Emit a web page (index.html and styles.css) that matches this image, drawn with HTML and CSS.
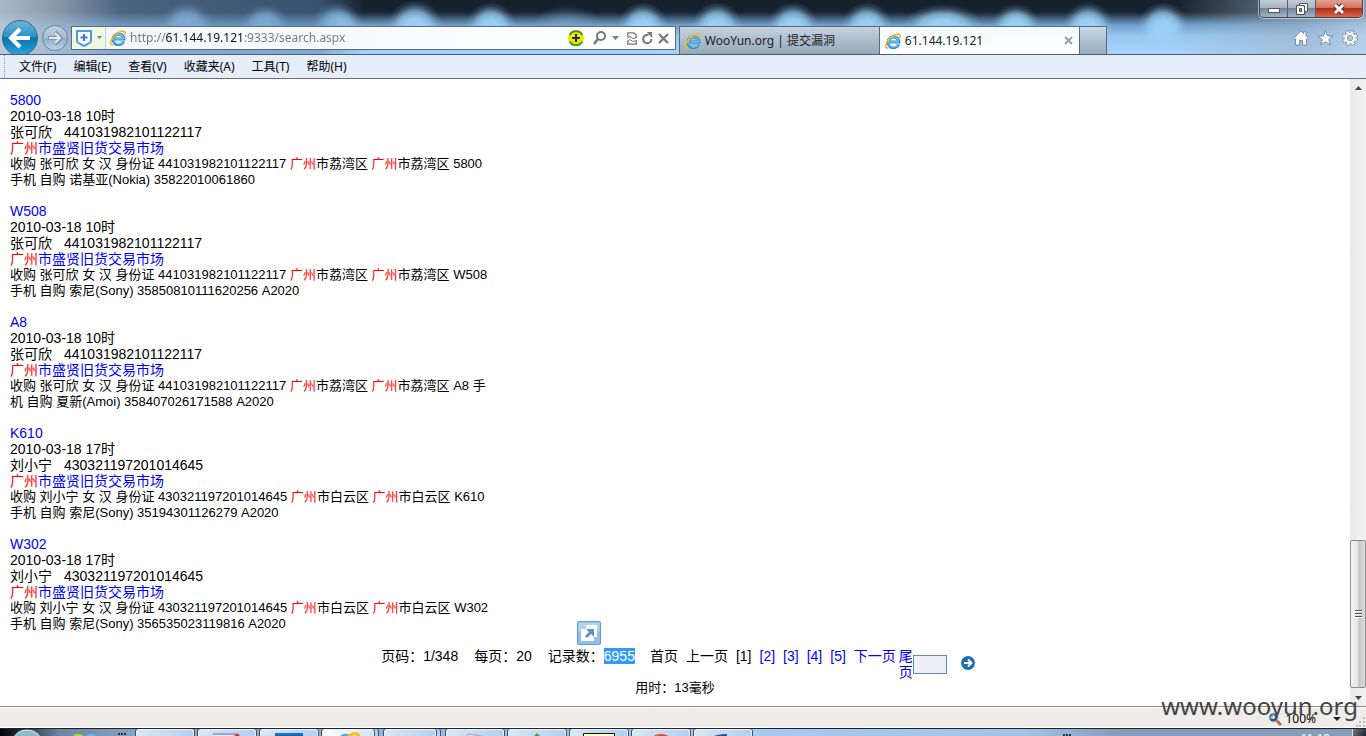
FILE: index.html
```
<!DOCTYPE html>
<html lang="zh-CN">

<head>
  <meta charset="UTF-8">
  <meta name="viewport" content="width=device-width, initial-scale=1.0">
  <title>61.144.19.121</title>
  <link rel="stylesheet" href="styles.css">
</head>

<body>
  <!-- Shared icon -->
  <svg class="defs" width="0" height="0" aria-hidden="true">
    <symbol id="ie" viewBox="0 0 16 16">
      <path d="M13.600 11.200A5.400 5.400 0 1 1 13.900 8.900H4.500" fill="none" stroke="#2f8fc8" stroke-width="3" />
      <path d="M13 11.200A5 5 0 1 1 13.500 8.900H5" fill="none" stroke="#7ccbf0" stroke-width="1.200" />
      <path d="M3.500 14.900C.2 15.700 0 12.500 2.200 8.800C4.800 4.400 9.500 .9 13 .9C15.300 .9 15.500 2.800 14.600 5" fill="none" stroke="#f3b71d" stroke-width="1.500" />
    </symbol>
  </svg>

  <header class="chrome">
    <div class="titlebar">
      <div class="window-buttons">
        <button class="win" aria-label="最小化"><svg width="14" height="14" viewBox="0 0 14 14"><rect x="1.500" y="6.500" width="11" height="4" fill="#fff" stroke="#4a5560" /></svg></button>
        <button class="win" aria-label="还原"><svg width="14" height="14" viewBox="0 0 14 14"><path d="M4.500 1.500h8v8h-8z" fill="#fff" stroke="#4a5560" /><path d="M1.500 3.500h8v9h-8z" fill="#fff" stroke="#4a5560" /><path d="M4.500 6.500h2v3h-2z" fill="#8799ac" stroke="#4a5560" /></svg></button>
        <button class="win win-close" aria-label="关闭"><svg width="14" height="14" viewBox="0 0 14 14"><path d="M3 3l8 8M11 3l-8 8" stroke="#5b3030" stroke-width="5" /><path d="M3 3l8 8M11 3l-8 8" stroke="#fff" stroke-width="3" /></svg></button>
      </div>
    </div>

    <div class="navbar">
      <button class="back" aria-label="后退"><svg width="24" height="24" viewBox="0 0 24 24"><path d="M22 12H4M12 3L3 12l9 9" fill="none" stroke="#fff" stroke-width="4" /></svg></button>
      <button class="forward" aria-label="前进"><svg width="16" height="16" viewBox="0 0 16 16"><path d="M1 8h11M8 2l6 6-6 6" fill="none" stroke="#7f98ad" stroke-width="4" /><path d="M2 8h10M8 3l5 5-5 5" fill="none" stroke="#dfeaf3" stroke-width="2" /></svg></button>

      <div class="address">
        <button class="shield" aria-label="安全">
          <svg width="18" height="18" viewBox="0 0 18 18"><path d="M2 2h14v10c0 2-4 3-7 5c-3-2-7-3-7-5z" fill="#fff" stroke="#5598ea" stroke-width="2" stroke-linejoin="round" /><path d="M9 5v7M5.500 8.500h7" stroke="#2f7be0" stroke-width="2" /></svg>
          <svg width="5" height="4" viewBox="0 0 5 4"><path d="M0 0h5L2.500 3z" fill="#777" /></svg>
        </button>
        <svg class="site-icon" width="16" height="16"><use href="#ie" /></svg>
        <input class="url" type="text" aria-label="地址" value="http://61.144.19.121:9333/search.aspx">
        <div class="address-tools">
          <button aria-label="加速"><svg width="16" height="16" viewBox="0 0 16 16"><circle cx="8" cy="8" r="8" fill="#f4df10" /><path d="M1.800 5A7 7 0 0 1 14.200 5M1.800 11.500A7 7 0 0 0 14.200 11.500" fill="none" stroke="#399b20" stroke-width="2" /><path d="M8 4v8M4 8h8" stroke="#123b08" stroke-width="2" /></svg></button>
          <button class="search" aria-label="搜索"><svg width="26" height="14" viewBox="0 0 26 14"><circle cx="8" cy="5" r="4" fill="none" stroke="#777" stroke-width="2" /><path d="M5 8l-4 5" stroke="#777" stroke-width="2.500" /><path d="M19 5h7l-3.500 4z" fill="#777" /></svg></button>
          <button aria-label="兼容性视图"><svg width="10" height="13" viewBox="0 0 10 13"><path d="M.8 5V.8h6L9.200 3v3M.8 9v3.200h8.400V9" fill="none" stroke="#777" stroke-width="1.300" /><path d="M0 6.500l3-2 3 2 4-1M0 9.500l3-2 3 2 4-1" fill="none" stroke="#777" /></svg></button>
          <button aria-label="刷新"><svg width="11" height="13" viewBox="0 0 11 13"><path d="M9.500 7A4.200 4.200 0 1 1 6.500 3" fill="none" stroke="#777" stroke-width="2" /><path d="M5 0h5v6z" fill="#777" /></svg></button>
          <button aria-label="停止"><svg width="11" height="11" viewBox="0 0 11 11"><path d="M1 1l9 9M10 1l-9 9" stroke="#777" stroke-width="2.200" /></svg></button>
        </div>
      </div>

      <nav class="tabs">
        <a class="tab" href="#wooyun"><svg width="16" height="16"><use href="#ie" /></svg><span>WooYun.org | 提交漏洞</span></a>
        <a class="tab tab-active" href="#search"><svg width="16" height="16"><use href="#ie" /></svg><span>61.144.19.121</span><svg class="tab-close" width="9" height="9" viewBox="0 0 9 9"><path d="M1 1l7 7M8 1l-7 7" stroke="#9a9fa3" stroke-width="2" /></svg></a>
        <button class="tab-new" aria-label="新建选项卡"></button>
      </nav>

      <div class="tools">
        <button aria-label="主页"><svg width="16" height="16" viewBox="0 0 16 16"><path d="M8 1l2.500 2.400V1.800h2.500v4L15.500 8.500l-1 1-1-.8V15h-4v-4.500h-3V15h-4V8.700l-1 .8-1-1z" fill="#fff" stroke="#7590ab" /></svg></button>
        <button aria-label="收藏夹"><svg width="17" height="16" viewBox="0 0 17 16"><path d="M8.500.8l2 5.200h5.700l-4.500 3.500 1.700 5.500-4.900-3.300L3.600 15l1.700-5.500L.8 6h5.700z" fill="#fff" stroke="#7590ab" /></svg></button>
        <button aria-label="工具"><svg width="16" height="16" viewBox="0 0 16 16"><circle cx="8" cy="8" r="6.300" fill="none" stroke="#7590ab" stroke-width="3.400" stroke-dasharray="3.300 1.650" /><circle cx="8" cy="8" r="4.200" fill="none" stroke="#7590ab" stroke-width="4" /><circle cx="8" cy="8" r="6.200" fill="none" stroke="#fff" stroke-width="2" stroke-dasharray="2.400 2.470" stroke-dashoffset="-.4" /><circle cx="8" cy="8" r="4.200" fill="none" stroke="#fff" stroke-width="2.500" /></svg></button>
      </div>
    </div>
  </header>

  <nav class="menubar">
    <a href="#file">文件(F)</a>
    <a href="#edit">编辑(E)</a>
    <a href="#view">查看(V)</a>
    <a href="#favorites">收藏夹(A)</a>
    <a href="#tools">工具(T)</a>
    <a href="#help">帮助(H)</a>
  </nav>

  <div class="viewport">
    <main class="page">
      <section class="results">
        <article class="result">
          <a class="title" href="#r1">5800</a>
          <p>2010-03-18 10时</p>
          <p><span class="name">张可欣</span>441031982101122117</p>
          <a class="market" href="#m1"><em>广州</em>市盛贤旧货交易市场</a>
          <p class="detail">收购 张可欣 女 汉 身份证 441031982101122117 <em>广州</em>市荔湾区 <em>广州</em>市荔湾区 5800<br>手机 自购 诺基亚(Nokia) 35822010061860</p>
        </article>
        <article class="result">
          <a class="title" href="#r2">W508</a>
          <p>2010-03-18 10时</p>
          <p><span class="name">张可欣</span>441031982101122117</p>
          <a class="market" href="#m2"><em>广州</em>市盛贤旧货交易市场</a>
          <p class="detail">收购 张可欣 女 汉 身份证 441031982101122117 <em>广州</em>市荔湾区 <em>广州</em>市荔湾区 W508<br>手机 自购 索尼(Sony) 35850810111620256 A2020</p>
        </article>
        <article class="result">
          <a class="title" href="#r3">A8</a>
          <p>2010-03-18 10时</p>
          <p><span class="name">张可欣</span>441031982101122117</p>
          <a class="market" href="#m3"><em>广州</em>市盛贤旧货交易市场</a>
          <p class="detail">收购 张可欣 女 汉 身份证 441031982101122117 <em>广州</em>市荔湾区 <em>广州</em>市荔湾区 A8 手<br>机 自购 夏新(Amoi) 358407026171588 A2020</p>
        </article>
        <article class="result">
          <a class="title" href="#r4">K610</a>
          <p>2010-03-18 17时</p>
          <p><span class="name">刘小宁</span>430321197201014645</p>
          <a class="market" href="#m4"><em>广州</em>市盛贤旧货交易市场</a>
          <p class="detail">收购 刘小宁 女 汉 身份证 430321197201014645 <em>广州</em>市白云区 <em>广州</em>市白云区 K610<br>手机 自购 索尼(Sony) 35194301126279 A2020</p>
        </article>
        <article class="result">
          <a class="title" href="#r5">W302</a>
          <p>2010-03-18 17时</p>
          <p><span class="name">刘小宁</span>430321197201014645</p>
          <a class="market" href="#m5"><em>广州</em>市盛贤旧货交易市场</a>
          <p class="detail">收购 刘小宁 女 汉 身份证 430321197201014645 <em>广州</em>市白云区 <em>广州</em>市白云区 W302<br>手机 自购 索尼(Sony) 356535023119816 A2020</p>
        </article>
      </section>

      <form class="pager">
        <div class="counts">
          <span>页码：1/348</span>
          <span>每页：20</span>
          <span class="total">记录数：<mark>6955</mark>
            <button class="accelerator" type="button" aria-label="加速器"><svg width="24" height="24" viewBox="0 0 24 24"><rect x=".5" y=".5" width="23" height="23" rx="1" fill="#92bfe3" stroke="#639dcc" /><path d="M1.500 1.500h21v9h-21z" fill="#b1d3ed" /><path d="M9 4h11v12h-3v4H4V8h5z" fill="#fff" /><path d="M9 8h8v8l-3-3-4 4-2-2 4-4z" fill="#5b91bd" /></svg></button>
          </span>
        </div>
        <div class="links">
          <span>首页</span>
          <span>上一页</span>
          <span>[1]</span>
          <a href="#p2">[2]</a>
          <a href="#p3">[3]</a>
          <a href="#p4">[4]</a>
          <a href="#p5">[5]</a>
          <a href="#next">下一页</a>
        </div>
        <a class="last" href="#last">尾页</a>
        <input class="goto" type="text" aria-label="跳转页码">
        <button class="go" type="button" aria-label="跳转"><svg width="14" height="14" viewBox="0 0 14 14"><circle cx="7" cy="7" r="7" fill="#1a6fb5" /><path d="M3 7h7M7 3.500L10.500 7 7 10.500" fill="none" stroke="#fff" stroke-width="2" /></svg></button>
      </form>
      <p class="elapsed">用时：13毫秒</p>
    </main>

    <div class="scrollbar">
      <button aria-label="向上滚动"><svg width="7" height="4" viewBox="0 0 7 4"><path d="M0 4h7L3.500 0z" fill="#444" /></svg></button>
      <div class="track">
        <div class="thumb"><i></i><i></i><i></i></div>
      </div>
      <button aria-label="向下滚动"><svg width="7" height="4" viewBox="0 0 7 4"><path d="M0 0h7L3.500 4z" fill="#444" /></svg></button>
    </div>
  </div>

  <footer class="statusbar">
    <button class="zoom">
      <svg width="14" height="14" viewBox="0 0 14 14"><path d="M8 8l5 5" stroke="#a87545" stroke-width="3" /><circle cx="5.500" cy="5.500" r="4.500" fill="#2774c4" stroke="#b8c8d8" /><path d="M5.500 3v5M3 5.500h5" stroke="#fff" stroke-width="1.500" /></svg>
      <span>100%</span>
      <svg class="caret" width="8" height="4" viewBox="0 0 8 4"><path d="M0 0h8L4 4z" fill="#222" /></svg>
    </button>
    <svg class="grip" width="10" height="10" viewBox="0 0 10 10"><path d="M7 0h2v2h-2zM3 4h2v2h-2zM7 4h2v2h-2zM0 8h2v2h-2zM3 8h2v2h-2zM7 8h2v2h-2z" fill="#bbb" /></svg>
    <span class="watermark">www.wooyun.org</span>
  </footer>

  <div class="taskbar">
    <div class="start">
      <svg width="28" height="8" viewBox="0 0 28 8"><ellipse cx="14" cy="10" rx="13" ry="9" fill="#93b7cb" stroke="#d5f2fa" /></svg>
      <svg class="quick" width="26" height="8" viewBox="0 0 26 8"><ellipse cx="6" cy="9" rx="6" ry="4" fill="#b6df18" /><ellipse cx="19" cy="9" rx="6" ry="4" fill="#5cbdf0" /></svg>
      <svg width="8" height="8" viewBox="0 0 8 8"><path d="M0 5h2M3 5h2M6 5h2" stroke="#333" stroke-width="2" /></svg>
    </div>
    <button class="task" aria-label="文件夹"><svg width="32" height="8" viewBox="0 0 32 8"><path d="M7 6h14v2h-14z" fill="#c5b98b" /></svg></button>
    <button class="task" aria-label="画图"><svg width="32" height="8" viewBox="0 0 32 8"><path d="M2 3h26v5h-26z" fill="#e8e5fa" /><path d="M2 3h26v2h-26z" fill="#a69fd0" /><circle cx="26" cy="7" r="3" fill="#d33b2a" /></svg></button>
    <button class="task" aria-label="窗口"><svg width="32" height="8" viewBox="0 0 32 8"><path d="M2 3h28v5h-28z" fill="#1874ce" /><path d="M2 6h28" stroke="#0a4d9c" /></svg></button>
    <button class="task stacked task-current" aria-label="Internet Explorer"><svg width="32" height="8" viewBox="0 0 32 8"><path d="M8 8c4-4 8-3 11-1" fill="none" stroke="#4ba7d5" stroke-width="3" /><path d="M16 7c5-5 12-4 11 1" fill="none" stroke="#f2bd22" stroke-width="3" /></svg></button>
    <button class="task stacked" aria-label="命令行"><svg width="32" height="8" viewBox="0 0 32 8"><path d="M2 6h28v2h-28z" fill="#858a90" /></svg></button>
    <button class="task" aria-label="文档"><svg width="32" height="8" viewBox="0 0 32 8"><path d="M7 8l2-4 20 3v1z" fill="#e6e2f2" stroke="#a69dc4" /></svg></button>
    <button class="task" aria-label="下载"><svg width="32" height="8" viewBox="0 0 32 8"><path d="M16 3l5 5h-10z" fill="#2fae3e" /></svg></button>
    <button class="task" aria-label="便签"><svg width="32" height="8" viewBox="0 0 32 8"><path d="M.5 3.500h31v6h-31z" fill="#ffffc8" stroke="#111" /></svg></button>
    <button class="task" aria-label="浏览器"><svg width="32" height="8" viewBox="0 0 32 8"><ellipse cx="16" cy="9" rx="9" ry="5" fill="#df4b3b" /></svg></button>
    <button class="task" aria-label="编辑器"><svg width="32" height="8" viewBox="0 0 32 8"><path d="M2 8c6-3 12-4 18-4v4z" fill="#2856a5" /></svg></button>
    <div class="tray">
      <svg width="8" height="8" viewBox="0 0 8 8"><path d="M0 6h2M3 6h2M6 6h2" stroke="#333" stroke-width="2" /></svg>
      <time>11:19</time>
      <button class="desktop" aria-label="显示桌面"></button>
    </div>
  </div>
</body>

</html>
```
FILE: styles.css
```
/* Global Styles */
* {
  box-sizing: border-box;
}

body {
  margin: 0;
  height: 100vh;
  display: flex;
  flex-direction: column;
  overflow: hidden;
  background: #fff;
  color: #000;
  font-family: "Liberation Sans", "Noto Sans CJK SC", sans-serif;
  font-size: 14px;
  line-height: 16px;
}

button {
  display: flex;
  align-items: center;
  justify-content: center;
  padding: 0;
  border: 0;
  background: none;
  color: inherit;
  font: inherit;
}

svg {
  flex: none;
}

a {
  color: #0000ff;
  text-decoration: none;
}

p {
  margin: 0;
}

em {
  color: #ff0000;
  font-style: normal;
}

.defs {
  position: absolute;
}

/* Window frame */
.chrome {
  --glow: rgba(156, 210, 250, 0.95) 25%, rgba(156, 210, 250, 0.7) 55%, rgba(156, 210, 250, 0.2) 80%, rgba(156, 210, 250, 0);
  border-bottom: 1px solid #4d5c70;
  background:
    linear-gradient(90deg, rgba(186, 201, 216, 0.9) 0, rgba(160, 180, 202, 0.8) 60px, rgba(110, 145, 182, 0.6) 120px, rgba(90, 130, 175, 0.5) 320px, rgba(90, 130, 175, 0) 365px),
    linear-gradient(90deg, rgba(170, 190, 210, 0) 86%, rgba(160, 180, 200, 0.6) 95%, rgba(190, 210, 230, 0.7)),
    radial-gradient(ellipse 26px 24px at 187px 26px, var(--glow)),
    radial-gradient(ellipse 24px 22px at 265px 26px, var(--glow)),
    radial-gradient(ellipse 26px 24px at 337px 26px, var(--glow)),
    radial-gradient(ellipse 28px 26px at 415px 26px, var(--glow)),
    radial-gradient(ellipse 25px 24px at 491px 26px, var(--glow)),
    radial-gradient(ellipse 36px 20px at 567px 26px, rgba(122, 162, 204, 0.8), rgba(122, 162, 204, 0)),
    radial-gradient(ellipse 25px 24px at 643px 26px, var(--glow)),
    radial-gradient(ellipse 25px 24px at 717px 26px, var(--glow)),
    radial-gradient(ellipse 25px 24px at 793px 26px, var(--glow)),
    radial-gradient(ellipse 25px 24px at 867px 26px, var(--glow)),
    radial-gradient(ellipse 40px 22px at 943px 26px, var(--glow)),
    radial-gradient(ellipse 24px 22px at 1016px 26px, var(--glow)),
    radial-gradient(ellipse 25px 24px at 1088px 26px, var(--glow)),
    radial-gradient(ellipse 25px 24px at 1163px 26px, var(--glow)),
    linear-gradient(#14202c 0, #17232f 12px, #6f9fca 25px, #97c7f0 36px, #a8d4fb 54px);
}

.titlebar {
  display: flex;
  justify-content: flex-end;
  height: 18px;
  padding-right: 3px;
}

.window-buttons {
  display: flex;
  border: 1px solid #3c4753;
  border-top: 0;
  border-radius: 0 0 5px 5px;
  box-shadow: 0 0 0 1px rgba(255, 255, 255, 0.5);
  overflow: hidden;
}

.win {
  width: 28px;
  height: 17px;
  border-right: 1px solid #55616e;
  background: linear-gradient(#c5ced8, #a5b1bf 50%, #75869a 50%, #a3b4c6);
}

.win-close {
  width: 46px;
  border-right: 0;
  background: linear-gradient(#e0a294, #cf6c5a 50%, #b02d17 50%, #d9674a);
}

.navbar {
  display: flex;
  height: 36px;
  padding-left: 2px;
  font-family: "Noto Sans", "Noto Sans CJK SC", sans-serif;
  font-size: 12px;
  overflow: hidden;
}

.back {
  flex: none;
  width: 36px;
  height: 36px;
  margin-top: 2px;
  border: 1px solid #3d6482;
  border-radius: 50%;
  background: linear-gradient(#6db5d9, #2a93c8 45%, #0873b0 50%, #2ba4da);
}

.forward {
  flex: none;
  width: 26px;
  height: 26px;
  margin: 7px 3px 0 4px;
  border: 1px solid #6e8597;
  border-radius: 50%;
  background: linear-gradient(#c0d2e1, #a4bccf 50%, #8fafc8 50%, #b8d4ea);
}

.address {
  flex: 12 1 0;
  display: flex;
  align-items: center;
  height: 24px;
  margin-top: 8px;
  border: 1px solid #5d6b78;
  background: linear-gradient(90deg, #f2f7fb, #fff);
}

.shield {
  gap: 4px;
  width: 34px;
  height: 22px;
  border-right: 1px solid #ccd3c8;
  background: #eff8e0;
}

.site-icon {
  margin: 0 4px;
}

.url {
  flex: 1;
  min-width: 0;
  padding: 0;
  border: 0;
  outline: 0;
  /* the domain is darker than the rest of the address */
  background: linear-gradient(90deg, #777 36px, #111 36px, #111 114px, #777 114px);
  -webkit-background-clip: text;
  background-clip: text;
  color: transparent;
  font: inherit;
}

.address-tools {
  display: flex;
  align-items: center;
  gap: 5px;
  padding-right: 6px;
}

.address-tools .search {
  margin: 0 3px 0 4px;
}

.tabs {
  display: flex;
  height: 28px;
  margin: 8px 0 0 3px;
  border: 1px solid #5d6b78;
  border-bottom: 0;
}

.tab {
  display: flex;
  align-items: center;
  gap: 4px;
  width: 200px;
  padding: 0 6px 0 5px;
  border-right: 1px solid #5d6b78;
  background: linear-gradient(#c6d3df, #aebdcc 50%, #95a8ba);
  color: #222;
}

.tab-active {
  background: linear-gradient(#f2fbff, #fff);
}

.tab-close {
  margin-left: auto;
}

.tab-new {
  width: 26px;
  background: linear-gradient(#c8d8e6, #95abc0);
}

.tools {
  flex: 5 1 0;
  display: flex;
  align-items: center;
  justify-content: flex-end;
  gap: 8px;
  padding: 4px 8px 0 0;
}

/* Menu */
.menubar {
  display: flex;
  align-items: center;
  gap: 17px;
  height: 23px;
  padding-left: 14px;
  margin-left: 4px;
  border-left: 1px dotted #999;
  box-shadow: -4px 0 0 #e6eefa;
  background: #e6eefa;
  font-family: "Noto Sans", "Noto Sans CJK SC", sans-serif;
  font-size: 12px;
}

.menubar a {
  color: #000;
}

/* Page */
.viewport {
  flex: 1;
  display: flex;
  min-height: 0;
  border-top: 1px solid #6c6f74;
}

.page {
  flex: 1;
  padding: 13px 0 0 10px;
  overflow: hidden;
}

.results {
  display: grid;
  gap: 15px;
}

.result {
  display: flex;
  flex-direction: column;
  align-items: flex-start;
}

.result .name {
  margin-right: 12px;
}

.detail {
  font-size: 13px;
}

.pager {
  display: flex;
  align-items: flex-start;
  justify-content: center;
  margin: 16px 0 0;
  padding-right: 4px;
}

.counts {
  display: flex;
  gap: 16px;
}

.total {
  position: relative;
}

mark {
  background: #3399ff;
  color: #fff;
}

.accelerator {
  position: absolute;
  right: 34px;
  bottom: 19px;
}

.links {
  display: flex;
  gap: 8px;
  margin-left: 15px;
}

.last {
  width: 14px;
  margin-left: 3px;
}

.goto {
  width: 34px;
  height: 19px;
  margin: 7px 14px 0 0;
  border: 1px solid #648bae;
  background: #ecf0f4;
}

.go {
  margin-top: 8px;
}

.elapsed {
  padding: 0 10px 0 0;
  font-size: 13px;
  text-align: center;
}

/* Scrollbar */
.scrollbar {
  display: flex;
  flex-direction: column;
  width: 16px;
  background: linear-gradient(90deg, #e8e8e8, #f3f3f3);
}

.scrollbar button {
  height: 17px;
}

.track {
  flex: 1;
  display: flex;
  flex-direction: column;
  justify-content: flex-end;
  padding-bottom: 1px;
}

.thumb {
  display: flex;
  flex-direction: column;
  align-items: center;
  justify-content: center;
  gap: 1px;
  height: 25%;
  border: 1px solid #8c8c8c;
  border-radius: 2px;
  background: linear-gradient(90deg, #f6f6f6, #e4e4e4 50%, #c6c6c6 55%, #dcdcdc);
}

.thumb i {
  width: 7px;
  height: 2px;
  border-bottom: 1px solid #fff;
  background: #555;
}

/* Status bar */
.statusbar {
  position: relative;
  display: flex;
  align-items: center;
  justify-content: flex-end;
  gap: 15px;
  height: 22px;
  border-top: 1px solid #8a8a8a;
  border-bottom: 1px solid #fff;
  box-shadow: inset 0 1px 0 #fff;
  background: #f0ecea;
  font-family: "Noto Sans", sans-serif;
  font-size: 12px;
}

.zoom {
  gap: 3px;
  padding-top: 3px;
}

.zoom .caret {
  margin-left: 14px;
}

.grip {
  align-self: flex-end;
}

.watermark {
  position: absolute;
  right: 8px;
  bottom: 5px;
  color: #444;
  font-size: 24px;
  line-height: 32px;
}

/* Taskbar */
.taskbar {
  flex: none;
  display: flex;
  gap: 4px;
  height: 8px;
  border-top: 1px solid #1a2430;
  overflow: hidden;
  background: linear-gradient(90deg, #000 0, #6c86a3 60px, #8aa6c4 140px, #a9c9ee 750px, #a4c2e6 75%, #869cb8 82%);
}

.start {
  display: flex;
  align-items: flex-start;
  width: 132px;
  padding-left: 13px;
}

.quick {
  margin: 0 20px 0 31px;
}

.task {
  width: 58px;
  height: 8px;
  border: 1px solid #e9f3fc;
  border-bottom: 0;
  border-radius: 3px 3px 0 0;
  box-shadow: 0 0 0 1px #3c526b;
  background: linear-gradient(100deg, #dbe7f4, #b4cfee);
}

.stacked {
  width: 52px;
  margin-right: 6px;
  box-shadow: 0 0 0 1px #3c526b, 3px 0 0 1px #b4cfee, 4px 0 0 1px #3c526b;
}

.task-current {
  background: linear-gradient(100deg, #fff, #d3e3f5);
}

.tray {
  flex: 1;
  display: flex;
  justify-content: flex-end;
  color: #fff;
  font-size: 12px;
}

.tray time {
  margin: 2px 22px 0 230px;
}

.desktop {
  width: 14px;
  height: 8px;
  border-left: 1px solid #ddd;
  background: linear-gradient(120deg, #777, #16202a);
}
```
